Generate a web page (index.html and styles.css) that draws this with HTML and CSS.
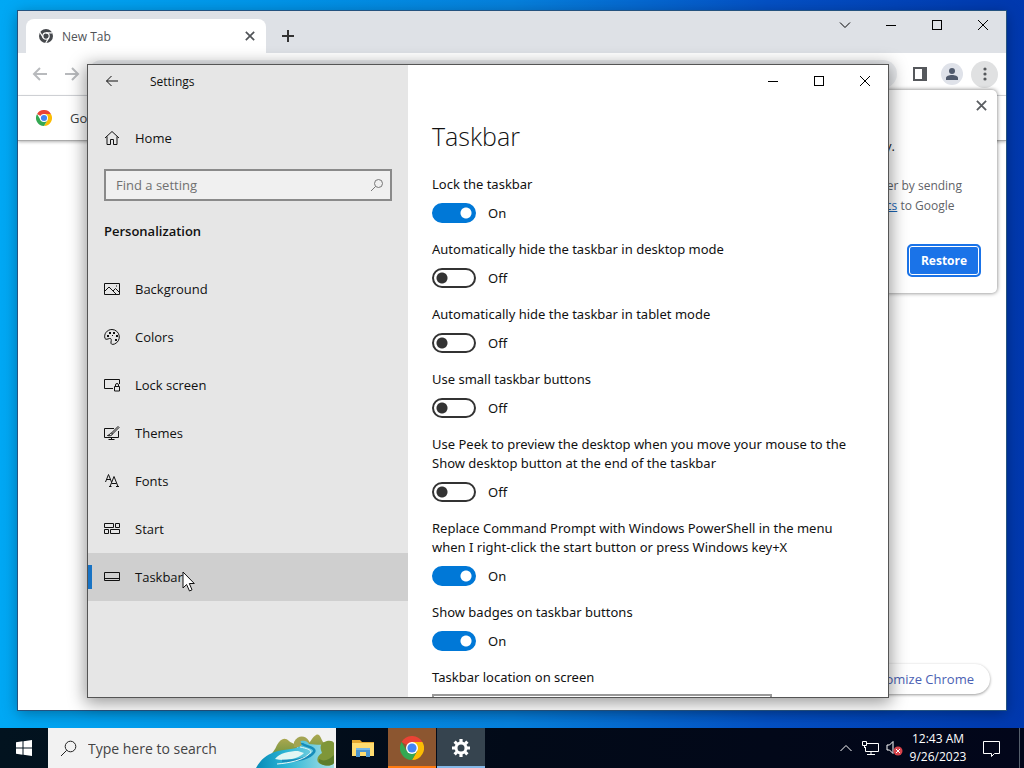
FILE: index.html
```html
<!DOCTYPE html>
<html lang="en">
<head>
<meta charset="utf-8">
<title>Taskbar settings</title>
<link rel="stylesheet" href="styles.css">
</head>
<body>
<svg class="defs" aria-hidden="true">
  <symbol id="close" viewBox="0 0 12 12"><path d="M1 1l10 10M11 1L1 11"/></symbol>
  <symbol id="max" viewBox="0 0 12 12"><rect x="1.5" y="1.5" width="9" height="9"/></symbol>
  <symbol id="min" viewBox="0 0 12 12"><path d="M1 6.500h10"/></symbol>
  <symbol id="chrome" viewBox="0 0 24 24">
    <path fill="#ea4335" d="M12 12L1.600 6A12 12 0 0 1 22.400 6z"/>
    <path fill="#fbbc04" d="M12 12V6h10.400A12 12 0 0 1 12 24l5.200-9z"/>
    <path fill="#34a853" d="M12 24A12 12 0 0 1 1.600 6l5.200 9L12 17.500l5.200-2.500z"/>
    <circle cx="12" cy="12" r="6" fill="#fff"/><circle cx="12" cy="12" r="4.600" fill="#4285f4"/>
  </symbol>
</svg>
<div class="desktop">
  <div class="workspace">
    <section class="browser" aria-label="Browser">
      <header class="tabstrip">
        <div class="tab">
          <svg width="14" height="14" viewBox="0 0 24 24"><circle cx="12" cy="12" r="12" fill="#45484c"/><circle cx="12" cy="12" r="5.500" fill="none" stroke="#fff" stroke-width="2"/><path d="M12 6.500h11M7.200 14.800L1.700 5.500M16.800 14.800L11.500 24" stroke="#fff" stroke-width="2"/></svg>
          <span class="tab-title">New Tab</span>
          <button class="icon-btn tab-close" aria-label="Close tab"><svg class="line bold" width="10" height="10"><use href="#close"/></svg></button>
        </div>
        <button class="icon-btn new-tab" aria-label="New tab"><svg class="line bold" width="14" height="14" viewBox="0 0 14 14"><path d="M7 1v12M1 7h12"/></svg></button>
        <div class="captions">
          <button aria-label="Search tabs"><svg class="line" width="12" height="12" viewBox="0 0 12 12"><path d="M1 3.500l5 5 5-5"/></svg></button>
          <button aria-label="Minimize"><svg class="line" width="12" height="12"><use href="#min"/></svg></button>
          <button aria-label="Maximize"><svg class="line" width="12" height="12"><use href="#max"/></svg></button>
          <button aria-label="Close"><svg class="line" width="12" height="12"><use href="#close"/></svg></button>
        </div>
      </header>
      <div class="toolbar">
        <button class="icon-btn nav" aria-label="Back"><svg width="16" height="16" viewBox="0 0 16 16"><path d="M15 8H2M8 2L2 8l6 6"/></svg></button>
        <button class="icon-btn nav" aria-label="Forward"><svg width="16" height="16" viewBox="0 0 16 16"><path d="M1 8h13M8 2l6 6-6 6"/></svg></button>
        <div class="omnibox"></div>
        <button class="icon-btn side" aria-label="Side panel"><svg width="14" height="14" viewBox="0 0 14 14"><rect x="1" y="1" width="12" height="12" fill="none" stroke="#55585c" stroke-width="2"/><path fill="#55585c" d="M9 1h4v12H9z"/></svg></button>
        <button class="icon-btn avatar" aria-label="Profile"><svg width="12" height="12" viewBox="0 0 12 12"><circle cx="6" cy="3" r="3"/><path d="M0 12V10c0-4 12-4 12 0v2z"/></svg></button>
        <button class="icon-btn more" aria-label="Menu"><svg width="4" height="14" viewBox="0 0 4 14"><circle cx="2" cy="2" r="1.600"/><circle cx="2" cy="7" r="1.600"/><circle cx="2" cy="12" r="1.600"/></svg></button>
      </div>
      <div class="infobar"><svg width="16" height="16"><use href="#chrome"/></svg><span>Google Chrome</span></div>
      <aside class="restore">
        <button class="icon-btn restore-close" aria-label="Dismiss"><svg class="line bold" width="11" height="11"><use href="#close"/></svg></button>
        <p class="restore-title">Chrome didn't shut down correctly.</p>
        <p class="restore-text">Help make Google Chrome better by sending<br>crash reports and <a href="#">usage statistics</a> to Google</p>
        <button class="restore-btn">Restore</button>
      </aside>
      <button class="customize">Customize Chrome</button>
    </section>

    <section class="settings" aria-label="Settings">
      <nav class="sidebar">
        <div class="titlebar">
          <button class="icon-btn" aria-label="Back"><svg class="line" width="14" height="12" viewBox="0 0 14 12"><path d="M13 6H1.500M6.500 1l-5 5 5 5"/></svg></button>
          <span class="app-name">Settings</span>
        </div>
        <a class="item home" href="#"><svg class="line" width="16" height="16" viewBox="0 0 16 16"><path d="M1 8l7-6.500L15 8M3 6.500v8h3.500v-5h3v5H13v-8"/></svg>Home</a>
        <div class="search"><input type="text" placeholder="Find a setting" aria-label="Find a setting"><svg class="line" width="14" height="14" viewBox="0 0 14 14"><circle cx="8.500" cy="5.500" r="4"/><path d="M5.500 8.500L1 13"/></svg></div>
        <h2>Personalization</h2>
        <a class="item" href="#"><svg class="line" width="16" height="16" viewBox="0 0 16 16"><path d="M.5 2.500h15v11H.500zM1 10l4-4 7 7M9 10l2.500-2.500L15 11"/><path d="M12 5h1"/></svg>Background</a>
        <a class="item" href="#"><svg class="line" width="16" height="16" viewBox="0 0 16 16"><path d="M8 .5a7.500 7.500 0 0 1 2.500 14.500C8 16 6.500 15 7 13s.5-4-1.500-3.500S2 11 1 9.500C-.5 5 3 .5 8 .5z"/><path class="dots" d="M3 6h2v2H3zM5 3h2v2H5zM9 3h2v2H9zM12 6h2v2h-2zM11 10h2v2h-2zM8 6h1v1H8z"/></svg>Colors</a>
        <a class="item" href="#"><svg class="line" width="16" height="16" viewBox="0 0 16 16"><path d="M9 11.500H.5v-9h15V7M10.500 9.500h5v4.500h-5zM11.500 9.500V8a1.500 1.500 0 0 1 3 0v1.500"/></svg>Lock screen</a>
        <a class="item" href="#"><svg class="line" width="16" height="16" viewBox="0 0 16 16"><path d="M10 3.500H.5v9h14V6M7.500 12.500v2M4.500 14.500h6M14 1.500L7.500 8l1 1L15 2.500zM7.500 8C6 8 6 10 3.500 10.500 5 11 8 11 8.500 9"/></svg>Themes</a>
        <a class="item" href="#"><svg class="line" width="16" height="16" viewBox="0 0 16 16"><path d="M1.500 9l3-7.500 3 7.500M2.500 6.500h4M6 13.500l4-10 4 10M7.500 10.500h5M5 13.500h2.500M12 13.500h3"/></svg>Fonts</a>
        <a class="item" href="#"><svg class="line" width="16" height="16" viewBox="0 0 16 16"><path d="M.5 2.500h9v4h-9zM11.500 2.500h4v4h-4zM.5 8.500h4v4h-4zM6.500 8.500h9v4h-9z"/></svg>Start</a>
        <a class="item current" href="#" aria-current="page"><svg class="line" width="16" height="16" viewBox="0 0 16 16"><path d="M.5 3.500h15v8H.5zM.5 9.500h15"/></svg>Taskbar</a>
      </nav>
      <main class="page">
        <div class="captions">
          <button aria-label="Minimize"><svg class="line" width="12" height="12"><use href="#min"/></svg></button>
          <button aria-label="Maximize"><svg class="line" width="12" height="12"><use href="#max"/></svg></button>
          <button aria-label="Close"><svg class="line" width="12" height="12"><use href="#close"/></svg></button>
        </div>
        <h1>Taskbar</h1>
        <div class="options">
          <div class="option"><label for="o1">Lock the taskbar</label><div class="switch"><input type="checkbox" role="switch" id="o1" checked><span>On</span></div></div>
          <div class="option"><label for="o2">Automatically hide the taskbar in desktop mode</label><div class="switch"><input type="checkbox" role="switch" id="o2"><span>Off</span></div></div>
          <div class="option"><label for="o3">Automatically hide the taskbar in tablet mode</label><div class="switch"><input type="checkbox" role="switch" id="o3"><span>Off</span></div></div>
          <div class="option"><label for="o4">Use small taskbar buttons</label><div class="switch"><input type="checkbox" role="switch" id="o4"><span>Off</span></div></div>
          <div class="option"><label for="o5">Use Peek to preview the desktop when you move your mouse to the Show desktop button at the end of the taskbar</label><div class="switch"><input type="checkbox" role="switch" id="o5"><span>Off</span></div></div>
          <div class="option"><label for="o6">Replace Command Prompt with Windows PowerShell in the menu when I right-click the start button or press Windows key+X</label><div class="switch"><input type="checkbox" role="switch" id="o6" checked><span>On</span></div></div>
          <div class="option"><label for="o7">Show badges on taskbar buttons</label><div class="switch"><input type="checkbox" role="switch" id="o7" checked><span>On</span></div></div>
          <div class="option"><label for="o8">Taskbar location on screen</label><select id="o8"><option>Bottom</option></select></div>
        </div>
      </main>
    </section>
    <svg class="cursor" width="14" height="21" viewBox="0 0 14 21"><path d="M1 1v16l3.600-3.500L7.500 20l2.500-1.200L7.300 12.500h5z" fill="#fff" stroke="#111"/></svg>
  </div>

  <footer class="taskbar">
    <button class="start" aria-label="Start"><svg width="16" height="16" viewBox="0 0 16 16"><path fill="#fff" d="M0 2.200L6.500 1.300V7.500H0zM7.500 1.200L16 0v7.500H7.500zM0 8.500h6.500v6.200L0 13.800zM7.500 8.500H16V16l-8.500-1.200z"/></svg></button>
    <div class="finder">
      <svg class="line glass" width="17" height="17" viewBox="0 0 17 17"><circle cx="10.500" cy="6.500" r="5.300"/><path d="M6.700 10.300L1 16"/></svg>
      <input type="text" placeholder="Type here to search" aria-label="Type here to search">
      <svg class="river" width="80" height="38" viewBox="0 0 80 38">
        <defs>
          <linearGradient id="water" x2="1" y2="0"><stop offset="0" stop-color="#078bb8"/><stop offset=".4" stop-color="#2db6d6"/><stop offset="1" stop-color="#a9e0e6"/></linearGradient>
          <linearGradient id="hill" x2="0" y2="1"><stop stop-color="#aaa74f"/><stop offset="1" stop-color="#6f9440"/></linearGradient>
        </defs>
        <path fill="url(#hill)" d="M14 26c2-3 5-6 7-11 4-7 8-8 12-4 3 3 6 2 8 4v11z"/>
        <path fill="#a3a452" d="M38 12c4-7 11-7 15-1l3 6H38z"/>
        <path fill="url(#hill)" d="M52 14c3-2 4-7 8-9 4-2 5 4 7 7 3 2 8 2 10 5v8H54z"/>
        <path fill="url(#water)" d="M0 38c5-9 11-14 22-17 11-2 19-2 24-6 1-2-3-3-1-4 4-1 7 1 8 3 7 1 14 1 25 0v24z"/>
        <path fill="#e2f6f3" d="M19 29c4-6 15-8 23-8l6 2c-5 5-17 9-29 6z"/>
        <path fill="none" stroke="#168cba" stroke-width="2.500" d="M46 13c0 3 15 4 12 9-4 6-17 9-32 9"/>
        <path fill="none" stroke="#e8faf8" d="M44 17c10 2 14 4 8 8-6 5-18 8-31 9"/>
        <path fill="#7f9638" d="M65 15c2-4 11-6 13-2v20c-3 4-13 3-16-1-2-4 1-7 4-9-1-3-2-5-1-8z"/>
        <path fill="#5c7d2b" d="M63 29c5 3 10 1 15-4v8c-3 4-13 3-15-1z"/>
      </svg>
    </div>
    <div class="apps">
      <button class="app" aria-label="File Explorer"><svg width="22" height="18" viewBox="0 0 22 18"><path fill="#e5a932" d="M0 1h8l2 2h12v14H0z"/><path fill="#ffdc70" d="M0 4h22v13H0z"/><path fill="#4b95cf" d="M4 18V9h14v9h-4v-5H8v5z"/><path fill="#76b8e8" d="M4 9h14v2H4z"/></svg></button>
      <button class="app app-chrome" aria-label="Google Chrome"><svg width="24" height="24"><use href="#chrome"/></svg></button>
      <button class="app app-settings" aria-label="Settings"><svg width="18" height="18" viewBox="0 0 18 18"><circle cx="9" cy="9" r="5" fill="none" stroke="#fff" stroke-width="3"/><path stroke="#fff" stroke-width="3.200" d="M9 0v3M9 15v3M0 9h3M15 9h3M2.600 2.600l2.200 2.200M13.200 13.200l2.200 2.200M2.600 15.400l2.200-2.200M13.200 4.800l2.200-2.200"/></svg></button>
    </div>
    <div class="tray">
      <button aria-label="Show hidden icons"><svg class="line" width="14" height="8" viewBox="0 0 14 8"><path d="M1.500 7L7 1.500 12.500 7"/></svg></button>
      <button aria-label="Network"><svg class="line" width="17" height="14" viewBox="0 0 17 14"><path d="M5 2.500h11.500v8H3.500V6M5 13.500h8M9 10.500v3M.5.500h4v4h-4zM2.500 4.500V7"/></svg></button>
      <button aria-label="Volume muted"><svg width="17" height="16" viewBox="0 0 17 16"><path fill="none" stroke="#fff" d="M1 5h2.500L7 1.500v12L3.500 10H1z"/><circle cx="12" cy="11" r="4.500" fill="#d8434b"/><path stroke="#fff" d="M10 9l4 4M14 9l-4 4"/></svg></button>
      <button class="clock"><span>12:43 AM</span><span>9/26/2023</span></button>
      <button class="notify" aria-label="Notifications"><svg class="line" width="17" height="17" viewBox="0 0 17 17"><path d="M.5 1.500h16v12h-5l-3 3v-3h-8z"/></svg></button>
      <button class="peek" aria-label="Show desktop"></button>
    </div>
  </footer>
</div>
</body>
</html>
```

FILE: styles.css
```css
* { box-sizing: border-box; }
body { margin: 0; font-family: "Open Sans", "Noto Sans", sans-serif; font-size: 13px; color: #111; }
h1, h2, p { margin: 0; }
button { border: 0; padding: 0; background: none; font: inherit; color: inherit; }
input, select { font: inherit; }
a { color: inherit; }
svg { flex: none; display: block; }
.defs { position: absolute; width: 0; height: 0; }
.line { fill: none; stroke: currentColor; stroke-width: 1; }
.bold { stroke-width: 2; }
.desktop { height: 100vh; display: flex; flex-direction: column; overflow: hidden; background: linear-gradient(90deg, #00a8f4 0%, #0095e8 25%, #0680dc 50%, #0450c4 75%, #0038ae 100%); }
.workspace { position: relative; flex: 1; min-height: 0; }
.icon-btn { display: flex; align-items: center; justify-content: center; }

.browser { position: absolute; inset: 11px 18px 18px; display: flex; flex-direction: column; overflow: hidden; background: #fff; outline: 1px solid #24527f; box-shadow: 0 3px 14px rgba(0, 0, 0, .35); color: #3c4043; }
.tabstrip { display: flex; height: 42px; background: #dee1e6; }
.tab { display: flex; align-items: center; gap: 9px; width: 240px; margin: 8px 0 0 8px; padding: 0 10px 0 13px; border-radius: 8px 8px 0 0; background: #fff; font-size: 12px; color: #505357; }
.tab-title { flex: 1; }
.tab-close { width: 12px; }
.new-tab { width: 28px; margin: 8px 0 0 8px; color: #333; }
.captions { display: flex; margin-left: auto; height: 32px; color: #000; }
.captions button { display: flex; width: 46px; align-items: center; justify-content: center; }
.tabstrip .captions { height: 28px; }
.toolbar { display: flex; align-items: center; height: 43px; padding: 0 8px 0 6px; border-bottom: 1px solid #dadce0; }
.nav { width: 32px; }
.nav svg { fill: none; stroke: #b8babd; stroke-width: 2; }
.omnibox { flex: 1; height: 28px; margin-right: 12px; border-radius: 14px; background: #eceef1; }
.side { width: 22px; margin-right: 10px; }
.avatar { width: 22px; height: 22px; margin-right: 8px; border-radius: 50%; background: #dfe2e9; fill: #505a6c; }
.more { width: 27px; height: 27px; border-radius: 50%; background: #e0e1e2; fill: #55585c; }
.infobar { display: flex; align-items: center; gap: 18px; height: 45px; padding-left: 18px; border-bottom: 1px solid #aaa; box-shadow: 0 1px 3px rgba(0, 0, 0, .3); }
.restore { position: absolute; top: 79px; right: 9px; width: 320px; display: flex; flex-direction: column; align-items: flex-end; padding: 8px 16px 16px 20px; border-radius: 5px; background: #fff; box-shadow: 0 0 4px rgba(0, 0, 0, .55); font-size: 12px; line-height: 20px; color: #5f6368; white-space: nowrap; }
.restore-close { width: 14px; height: 14px; margin-right: -7px; color: #5a5d61; }
.restore-title { margin: 24px 86px 0 0; color: #202124; font-size: 13px; }
.restore-text { margin: 20px 19px 0 0; }
.restore-text a { color: #1b67b8; }
.restore-btn { width: 74px; height: 33px; margin-top: 28px; border: 2px solid #1a73e8; border-radius: 5px; background: #1a73e8; box-shadow: inset 0 0 0 1px #fff; color: #fff; font-weight: 700; }
.customize { position: absolute; right: 16px; bottom: 16px; height: 30px; padding: 0 16px; border-radius: 15px; background: #fff; box-shadow: 0 1px 3px rgba(0, 0, 0, .4); color: #4b5fb3; }

.settings { position: absolute; inset: 64px 135px 30px 87px; display: flex; border: 1px solid #555; background: #fff; box-shadow: 0 3px 16px 2px rgba(0, 0, 0, .4); }
.sidebar { width: 320px; flex: none; background: #e6e6e6; overflow: hidden; }
.titlebar { display: flex; align-items: center; height: 32px; padding-left: 17px; gap: 31px; }
.app-name { font-size: 12px; }
.item { display: flex; align-items: center; gap: 15px; height: 48px; padding-left: 16px; text-decoration: none; }
.home { margin-top: 17px; }
.dots { fill: currentColor; stroke: none; }
.search { display: flex; align-items: center; height: 32px; margin: 7px 16px 0; padding: 0 6px 0 10px; border: 2px solid #8a8a8a; background: #f0f0f0; color: #777; }
.search input { flex: 1; min-width: 0; border: 0; padding: 0; background: none; outline: 0; }
.search input::placeholder { color: #707070; opacity: 1; }
h2 { margin: 20px 16px 24px; font-size: 13px; line-height: 20px; font-weight: 600; }
.current { background: linear-gradient(#1873c4, #1873c4) left center / 4px 24px no-repeat #cfcfcf; }
.page { flex: 1; min-width: 0; overflow: hidden; background: #fff; }
.page .captions { justify-content: flex-end; }
h1 { margin: 22px 24px 0; font-size: 25px; line-height: 34px; font-weight: 300; }
.options { display: flex; flex-direction: column; gap: 17px; padding: 22px 24px 0; font-family: "Noto Sans", sans-serif; }
.option { display: flex; flex-direction: column; gap: 9px; line-height: 19px; }
.switch { display: flex; align-items: center; gap: 12px; height: 20px; }
.switch input { appearance: none; flex: none; width: 44px; height: 20px; margin: 0; border: 2px solid #333; border-radius: 10px; background: radial-gradient(circle at 8px 8px, #333 5px, transparent 6px); }
.switch input:checked { border-color: #0078d7; background: radial-gradient(circle at 32px 8px, #fff 5px, #0078d7 6px); }
.option select { width: 340px; height: 32px; border: 2px solid #999; background: #fff; margin-top: -2px; }
.cursor { position: absolute; left: 182px; top: 571px; }

.taskbar { display: flex; height: 40px; background: linear-gradient(90deg, #02131f, #020a18 50%, #02061a); color: #fff; }
.taskbar button { display: flex; align-items: center; justify-content: center; }
.start { width: 48px; }
.finder { display: flex; align-items: center; width: 288px; padding-left: 12px; gap: 11px; background: #f2f2f2; color: #222; overflow: hidden; }
.finder input { flex: 1; min-width: 0; padding: 0; border: 0; outline: 0; background: none; font-size: 14px; }
.finder input::placeholder { color: #444; opacity: 1; }
.river { align-self: flex-end; }
.apps { display: flex; gap: 1px; padding-left: 3px; }
.app { width: 48px; }
.app-chrome { background: #8c5630; box-shadow: inset 0 -2px #ff7a10; }
.app-settings { background: #36444f; box-shadow: inset 0 -2px #85b8e8; }
.tray { display: flex; margin-left: auto; }
.tray button { width: 24px; }
.tray .clock { flex-direction: column; width: 64px; font-size: 12px; line-height: 18px; }
.tray .notify { width: 42px; margin-right: 7px; }
.tray .peek { width: 5px; border-left: 1px solid #56606c; }
```
